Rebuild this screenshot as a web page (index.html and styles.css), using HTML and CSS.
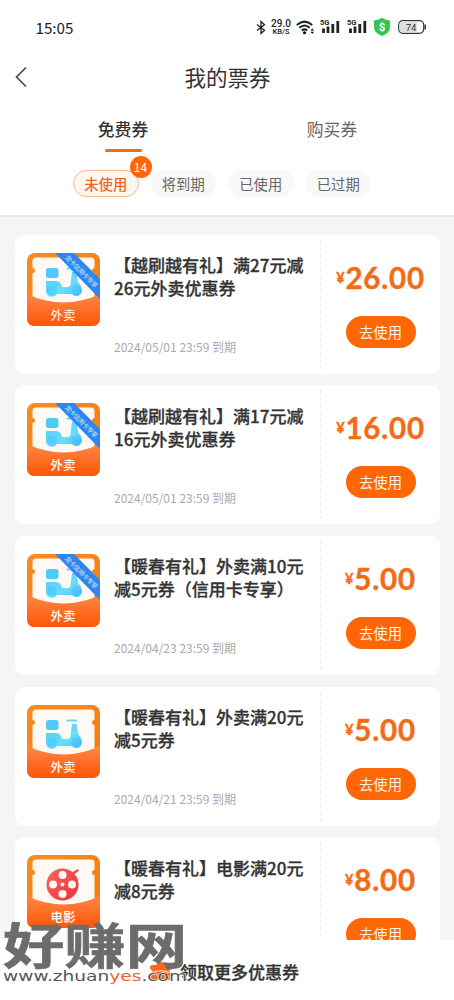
FILE: index.html
```
<!DOCTYPE html>
<html lang="zh-CN">
<head>
<meta charset="utf-8">
<title>我的票券</title>
<link rel="stylesheet" href="styles.css">
</head>
<body>
<svg class="defs" width="0" height="0" aria-hidden="true">
  <defs>
    <linearGradient id="frame" x1="0" y1="0" x2="1" y2="1"><stop offset="0" stop-color="#f98b20"/><stop offset="1" stop-color="#f07c18"/></linearGradient>
    <linearGradient id="pocket" x1="0" y1="0" x2="0" y2="1"><stop offset="0" stop-color="#ff8746"/><stop offset="1" stop-color="#ff5605"/></linearGradient>
    <linearGradient id="scoot" x1="0" y1="0" x2="1" y2="1"><stop offset="0" stop-color="#52cdf9"/><stop offset=".6" stop-color="#6bdcfc"/><stop offset="1" stop-color="#40bdfa"/></linearGradient>
    <linearGradient id="reel" x1="0" y1="0" x2="1" y2="1"><stop offset="0" stop-color="#f9655e"/><stop offset="1" stop-color="#ed3038"/></linearGradient>
    <clipPath id="round"><rect width="73" height="73" rx="8"/></clipPath>
    <symbol id="ticket" viewBox="0 0 73 73">
      <rect width="73" height="73" rx="8" fill="url(#frame)"/>
      <path d="M9 4.500H64Q67.500 4.500 67.500 8V15A2.500 2.500 0 0 0 67.500 20V52H5.500V20A2.500 2.500 0 0 0 5.500 15V8Q5.500 4.500 9 4.500Z" fill="#fff9f5"/>
    </symbol>
    <symbol id="front" viewBox="0 0 73 73">
      <path d="M0 41Q36.500 58 73 41V65Q73 73 65 73H8Q0 73 0 65Z" fill="url(#pocket)"/>
    </symbol>
    <symbol id="scooter" viewBox="0 0 73 73">
      <rect x="19" y="15" width="12.500" height="10" rx="2.500" fill="#50cbf8"/>
      <path d="M19 28H29Q34 28 35 34H41Q43 34 43.500 31L45 19H49.500L51.500 30Q55 33 55 37.500A5.700 5.700 0 0 1 45 41H30A6 6 0 0 1 19 37Z" fill="url(#scoot)"/>
      <path d="M39.500 15.500H50" stroke="#62d3f8" stroke-width="1.800"/>
      <circle cx="25" cy="37.500" r="5" fill="#35bafa" opacity=".35"/><circle cx="49.500" cy="37.500" r="5" fill="#35bafa" opacity=".35"/>
    </symbol>
    <symbol id="ribbon" viewBox="0 0 73 73">
      <g clip-path="url(#round)"><path d="M28 0H47L73 26V46Z" fill="#2e86ee"/>
      <text transform="translate(37.500 5) rotate(45)" class="ribbon-text" textLength="43">龙卡信用卡专享</text></g>
    </symbol>
    <symbol id="signal" viewBox="0 0 20 16">
      <text x="0" y="5.800" class="net-text">5G</text>
      <path d="M3.500 9.500V14M8 7.500V14M12.800 5V14M17.800 2V14" stroke="#222" stroke-width="2.800"/>
    </symbol>
  </defs>
</svg>
<div class="screen">
  <header class="top">
    <div class="status">
      <span class="clock">15:05</span>
      <div class="status-icons">
        <svg class="bt" width="10" height="15" viewBox="0 0 10 15"><path d="M1 4.500L8.500 10.300L5 13.500V1.500L8.500 4.700L1 10.500" fill="none" stroke="#222" stroke-width="1.300"/></svg>
        <span class="speed"><b>29.0</b><span>KB/S</span></span>
        <svg class="wifi" width="19" height="15" viewBox="0 0 19 15"><g fill="none" stroke="#222" stroke-width="2"><path d="M.8 5Q8.500-1.800 16.200 5"/><path d="M3.300 7.800Q8.500 3.200 13.700 7.800"/><path d="M5.800 10.500Q8.500 8.200 11.200 10.500"/></g><circle cx="8.500" cy="12.800" r="1.500"/><path d="M14.500 10.500L16.300 8.500L18.100 10.500ZM14.500 11.800L16.300 13.800L18.100 11.800Z"/></svg>
        <svg class="sig" width="20" height="16"><use href="#signal"/></svg>
        <svg class="sig second" width="20" height="16"><use href="#signal"/></svg>
        <svg class="shield" width="18" height="20" viewBox="0 0 18 20"><path d="M9 .8Q13 3.200 17 3.500V10Q17 16 9 19Q1 16 1 10V3.500Q5 3.200 9 .8Z" fill="#2dc84d"/><text x="9" y="14" class="coin">$</text></svg>
        <svg width="29" height="14" viewBox="0 0 29 14"><rect x=".7" y=".7" width="25" height="12.600" rx="4" fill="#fff" stroke="#333" stroke-width="1.200"/><path d="M4.500 1.500H19V12.500H4.500Q1.500 12.500 1.500 9.500V4.500Q1.500 1.500 4.500 1.500Z" fill="#dedede"/><path d="M27.200 4.500V9.500" stroke="#222" stroke-width="1.300"/><text x="13" y="10.800" class="battery">74</text></svg>
      </div>
    </div>
    <div class="nav">
      <svg class="back" width="14" height="22" viewBox="0 0 14 22"><path d="M12 1.500L2.500 11L12 20.500" fill="none" stroke="#4b4b4b" stroke-width="1.700"/></svg>
      <h1>我的票券</h1>
    </div>
    <nav class="tabs"><span class="tab active">免费券</span><span class="tab">购买券</span></nav>
    <div class="filters">
      <span class="chip selected">未使用<i class="badge">14</i></span>
      <span class="chip">将到期</span><span class="chip">已使用</span><span class="chip">已过期</span>
    </div>
  </header>
  <main class="list">
    <article class="card">
      <svg class="icon" viewBox="0 0 73 73"><use href="#ticket"/><use href="#scooter"/><use href="#front"/><text x="36" y="67" class="icon-label light">外卖</text><use href="#ribbon"/></svg>
      <div class="info"><h2>【越刷越有礼】满27元减<br>26元外卖优惠券</h2><p>2024/05/01 23:59 到期</p></div>
      <div class="action"><div class="price"><small>¥</small>26.00</div><span class="use">去使用</span></div>
    </article>
    <article class="card">
      <svg class="icon" viewBox="0 0 73 73"><use href="#ticket"/><use href="#scooter"/><use href="#front"/><text x="36" y="67" class="icon-label">外卖</text><use href="#ribbon"/></svg>
      <div class="info"><h2>【越刷越有礼】满17元减<br>16元外卖优惠券</h2><p>2024/05/01 23:59 到期</p></div>
      <div class="action"><div class="price"><small>¥</small>16.00</div><span class="use">去使用</span></div>
    </article>
    <article class="card">
      <svg class="icon" viewBox="0 0 73 73"><use href="#ticket"/><use href="#scooter"/><use href="#front"/><text x="36" y="67" class="icon-label">外卖</text><use href="#ribbon"/></svg>
      <div class="info"><h2>【暖春有礼】外卖满10元<br>减5元券（信用卡专享）</h2><p>2024/04/23 23:59 到期</p></div>
      <div class="action"><div class="price"><small>¥</small>5.00</div><span class="use">去使用</span></div>
    </article>
    <article class="card">
      <svg class="icon" viewBox="0 0 73 73"><use href="#ticket"/><use href="#scooter"/><use href="#front"/><text x="36" y="67" class="icon-label">外卖</text></svg>
      <div class="info"><h2>【暖春有礼】外卖满20元<br>减5元券</h2><p>2024/04/21 23:59 到期</p></div>
      <div class="action"><div class="price"><small>¥</small>5.00</div><span class="use">去使用</span></div>
    </article>
    <article class="card">
      <svg class="icon" viewBox="0 0 73 73"><use href="#ticket"/><circle cx="35.500" cy="29.500" r="16" fill="url(#reel)"/><path d="M45 19L50.500 15.500" stroke="#ef4b48" stroke-width="2.500" stroke-linecap="round"/><g fill="#fff9f5"><circle cx="35.500" cy="20" r="4"/><circle cx="35.500" cy="39" r="4"/><circle cx="26" cy="29.500" r="4"/><circle cx="45" cy="29.500" r="4"/><circle cx="35.500" cy="29.500" r="2"/></g><use href="#front"/><text x="36" y="67" class="icon-label">电影</text></svg>
      <div class="info"><h2>【暖春有礼】电影满20元<br>减8元券</h2></div>
      <div class="action"><div class="price"><small>¥</small>8.00</div><span class="use">去使用</span></div>
    </article>
  </main>
  <footer class="more">
    <svg width="24" height="20" viewBox="0 0 24 20"><path d="M1 6Q1 4 4 4H7Q8 1 12 1Q16 1 17 4H20Q23 4 23 7Q23 9 20 10L22 12V16Q22 19 19 19H5Q2 19 2 16V12L4 10Q1 9 1 6Z" fill="#ff681c"/><path d="M4 11.500Q12 8 20 11.500" fill="none" stroke="#ffe6d8" stroke-width="1.200"/></svg>
    <span>领取更多优惠券</span>
  </footer>
  <svg class="watermark" width="195" height="80" viewBox="0 0 195 80">
    <text transform="translate(3 45.500) scale(1 .78)" class="mark-name" textLength="184" lengthAdjust="spacingAndGlyphs">好赚网</text>
    <text x="3" y="63" class="mark-url" textLength="184" lengthAdjust="spacingAndGlyphs">www.zhuan<tspan class="yes">yes</tspan>.com</text>
  </svg>
</div>
</body>
</html>
```
FILE: styles.css
```
* { box-sizing: border-box; }
body { margin: 0; background: #f5f5f5; color: #333; font-family: "Noto Sans CJK SC", sans-serif; }
h1, h2, p { margin: 0; font-weight: 400; }
.defs { position: absolute; }
.screen { position: relative; display: flex; flex-direction: column; width: 454px; height: 1000px; overflow: hidden; }
.top { flex: none; height: 217px; background: #fff; border-bottom: 2px solid #e8e8e8; }
.status { display: flex; justify-content: space-between; align-items: center; height: 54px; padding: 0 27px 0 35.500px; }
.clock { font-size: 15.200px; line-height: 20px; color: #222; }
.status-icons { display: flex; align-items: center; }
.bt { margin-right: 5px; }
.speed { display: flex; flex-direction: column; align-items: center; width: 20px; font: 7.500px/8px Roboto, sans-serif; color: #222; }
.speed b { font-size: 10px; font-weight: 500; line-height: 9px; }
.speed span { font-weight: 500; }
.wifi { margin: 0 5px 0 5px; }
.sig { margin-right: 7px; }
.second { margin-right: 6px; }
.shield { margin-right: 7px; }
.net-text { font: bold 7.500px Roboto, sans-serif; fill: #222; }
.coin { font: bold 11.500px Roboto, sans-serif; fill: #fff; text-anchor: middle; }
.battery { font: 9.500px Roboto, sans-serif; fill: #333; text-anchor: middle; }
.nav { display: flex; align-items: center; height: 46px; padding-left: 14px; }
.nav h1 { width: 399px; font-size: 21.500px; line-height: 32px; text-align: center; }
.tabs { display: flex; height: 53px; padding: 14px 17.500px 0 18.500px; }
.tab { display: flex; flex: 1; flex-direction: column; align-items: center; font-size: 16.800px; line-height: 30px; color: #666; }
.tab.active { color: #333; font-weight: 500; }
.tab.active::after { content: ""; width: 37px; height: 3px; margin-top: 5px; border-radius: 2px; background: #ee6c1c; }
.filters { display: flex; gap: 12px; padding: 17px 0 0 73px; }
.chip { position: relative; width: 65.500px; height: 27px; border-radius: 14px; background: #f8f8f8; font-size: 14.300px; line-height: 27px; text-align: center; color: #666; }
.chip.selected { border: 1px solid #f3b79a; background: #fff6f0; line-height: 25px; font-weight: 500; color: #e6692a; }
.badge { position: absolute; top: -15px; right: -14px; width: 22px; height: 22px; border-radius: 50%; background: #ff6605; color: #fff; font-size: 12px; font-style: normal; font-weight: 400; line-height: 22px; }
.list { display: flex; flex: 1; flex-direction: column; gap: 11.700px; min-height: 0; padding: 17.500px 14px 0 15px; overflow: hidden; }
.card { display: flex; flex: none; height: 139px; padding-left: 11.500px; border-radius: 9px; background: #fff; }
.icon { flex: none; width: 73px; height: 73px; margin-top: 18px; }
.icon-label { font-size: 12.500px; font-weight: 500; fill: #fff; text-anchor: middle; }
.icon-label.light { font-weight: 400; }
.ribbon-text { font-size: 6.500px; fill: #cfe6ff; }
.info { display: flex; flex: none; flex-direction: column; width: 206px; margin-left: 14.500px; padding-top: 18.500px; }
.info h2 { font-size: 17px; font-weight: 500; line-height: 23px; white-space: nowrap; -webkit-text-stroke: .3px #333; }
.info p { margin-top: 39px; font-size: 12px; line-height: 18px; color: #aaa; white-space: nowrap; }
.action { display: flex; flex: 1; flex-direction: column; align-items: center; margin: 5px 0; padding-top: 18px; background: repeating-linear-gradient(#ececec 0 4px, #fff 4px 7px) left / 1px 100% no-repeat; }
.price { display: flex; align-items: baseline; height: 40px; padding-left: 1px; font: bold 29.500px/40px Lato, sans-serif; letter-spacing: .8px; color: #f46b15; white-space: nowrap; -webkit-text-stroke: .4px #f46b15; }
.price small { align-self: center; font-size: 14.500px; line-height: 40px; }
.use { width: 70px; height: 32px; margin: 18px 0 0 1px; border-radius: 16px; background: #ff6605; color: #fff4e8; font-size: 14.300px; line-height: 31px; text-align: center; }
.more { display: flex; flex: none; align-items: center; gap: 7px; height: 60px; padding: 2px 0 0 149px; background: #fff; font-size: 17px; font-weight: 500; -webkit-text-stroke: .3px #333; }
.watermark { position: absolute; left: 0; top: 918px; }
.mark-name { font-size: 62px; font-weight: 700; fill: #6c6c6c; stroke: #6c6c6c; stroke-width: .8px; }
.mark-url { font: 14.500px "DejaVu Sans", sans-serif; fill: #555; stroke: #fff; stroke-width: 1px; paint-order: stroke; }
.yes { fill: #ee6334; }
```
